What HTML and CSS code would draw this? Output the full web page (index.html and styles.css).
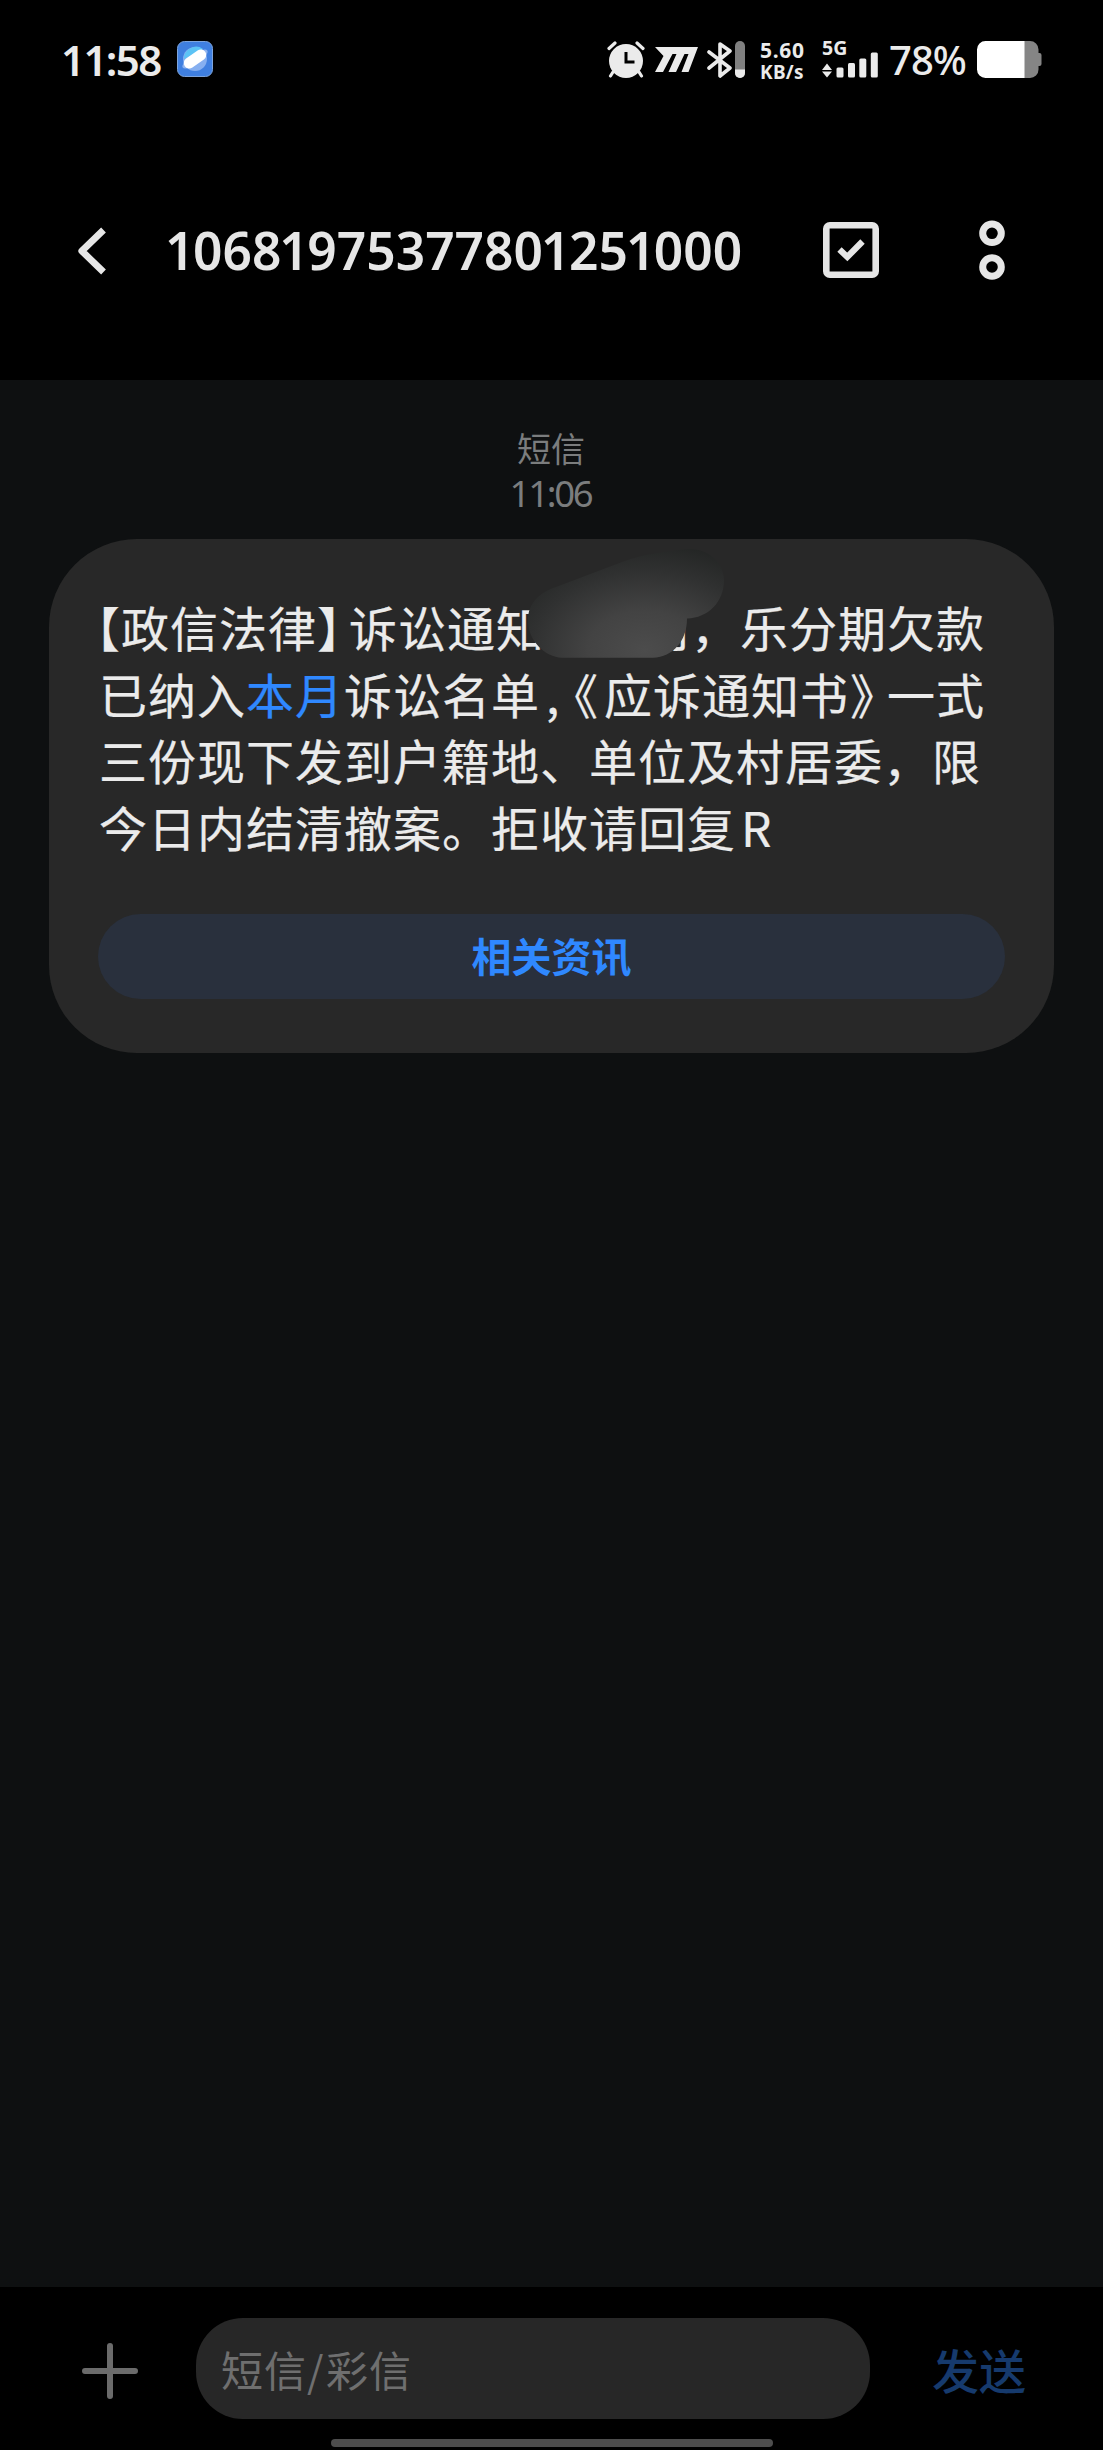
FILE: index.html
```html
<!DOCTYPE html>
<html lang="zh-CN">
<head>
<meta charset="utf-8">
<title>短信</title>
<link rel="stylesheet" href="styles.css">
</head>
<body>
<div class="phone">
  <header class="top">
    <div class="status">
      <div class="status-side">
        <span class="clock">11:58</span>
        <svg class="app-icon" width="36" height="36" viewBox="0 0 36 36">
          <rect x=".5" y=".5" width="35" height="35" rx="7" fill="#3f7fe0" stroke="#7da4dc"/>
          <circle cx="18" cy="18" r="12" fill="#86aff0"/>
          <path d="M7 18a12 12 0 0 1 19-10z" fill="#5cc3f5"/>
          <ellipse cx="18" cy="18" rx="15" ry="5" transform="rotate(-35 18 18)" fill="#8fb4ef"/>
          <rect x="5.500" y="12.500" width="25" height="11" rx="5.500" transform="rotate(-35 18 18)" fill="#fff"/>
        </svg>
      </div>
      <div class="status-side">
        <svg class="alarm" width="38" height="38" viewBox="0 0 38 38">
          <g stroke="#ebebeb" stroke-width="3.200" stroke-linecap="round"><path d="M2 7.500 8 2M36 7.500 30 2M6 31l-2.500 4M32 31l2.500 4"/></g>
          <circle cx="19" cy="20" r="17" fill="#ebebeb"/>
          <path d="M19 11v10h8.500" fill="none" stroke="#000" stroke-width="3"/>
        </svg>
        <svg class="m-icon" width="44" height="26" viewBox="0 0 44 26">
          <path d="M0 0H43L33.500 25H26.500L33.500 7H29.500L21 25H13.500L21.500 7H17.500L8 25H0L8.500 9z" fill="#ebebeb"/>
        </svg>
        <svg class="bt" width="38" height="38" viewBox="0 0 38 38">
          <path d="M2 11 23 27 13 35V3l10 7L2 27" fill="none" stroke="#ebebeb" stroke-width="3.600" stroke-linejoin="round" stroke-linecap="round"/>
          <rect x="28" y="0" width="10" height="37" rx="5" fill="#808080"/>
          <path d="M28 28.500h10V32a5 5 0 0 1-10 0z" fill="#ebebeb"/>
        </svg>
        <div class="speed"><span class="rate">5.60</span><span class="unit">KB/s</span></div>
        <div class="signal">
          <span class="net">5G</span>
          <svg width="56" height="26" viewBox="0 0 56 26">
            <path d="M5 11.500 10 18H0zM5 25.500 10 19.500H0z" fill="#ebebeb"/>
            <g fill="#ebebeb"><rect x="14.500" y="15.500" width="7" height="10" rx="1.500"/><rect x="26" y="11" width="7" height="14.500" rx="1.500"/><rect x="37.300" y="6.500" width="7" height="19" rx="1.500"/><rect x="48.800" y="0.500" width="7" height="25" rx="1.500"/></g>
          </svg>
        </div>
        <span class="percent">78%</span>
        <svg class="battery" width="65" height="37" viewBox="0 0 65 37">
          <path d="M47 0h6a8.500 8.500 0 0 1 8.500 8.500V12h1a2 2 0 0 1 2 2v9a2 2 0 0 1-2 2h-1v3.500A8.500 8.500 0 0 1 53 37h-6z" fill="#858585"/>
          <path d="M8.500 0H47.500V37H8.500A8.500 8.500 0 0 1 0 28.500V8.500A8.500 8.500 0 0 1 8.500 0z" fill="#fff"/>
        </svg>
      </div>
    </div>
    <div class="nav">
      <svg class="back" width="30" height="48" viewBox="0 0 30 48">
        <path d="M26.500 3 4.800 24 26.500 45" fill="none" stroke="#e6e6e6" stroke-width="6.800" stroke-linejoin="round"/>
      </svg>
      <h1 class="sender"><i>1</i>068<i>1</i>97537780<i>1</i>25<i>1</i>000</h1>
      <svg class="select" width="56" height="56" viewBox="0 0 56 56">
        <rect x="3.300" y="3.300" width="49.400" height="49.400" rx="3.500" fill="none" stroke="#e6e6e6" stroke-width="6.600"/>
        <path d="M16.500 27.500 24.300 35 39.500 19.500" fill="none" stroke="#e6e6e6" stroke-width="6.200"/>
      </svg>
      <svg class="more" width="26" height="60" viewBox="0 0 26 60">
        <g fill="none" stroke="#e6e6e6" stroke-width="7"><circle cx="13" cy="13.300" r="9.300"/><circle cx="13" cy="47" r="9.300"/></g>
      </svg>
    </div>
  </header>

  <main class="thread">
    <div class="stamp"><span class="kind">短信</span><span class="time">11:06</span></div>
    <article class="bubble">
      <div class="message">
        <p><span class="half open-lens">【</span>政信法律<span class="half close-lens">】</span>诉讼通知<span class="hidden-name"></span>司，乐分期欠款</p>
        <p>已纳入<a class="date">本月</a>诉讼名单<span class="comma">,</span><span class="half open-book">《</span>应诉通知书<span class="half close-book">》</span>一式</p>
        <p>三份现下发到户籍地、单位及村居委，限</p>
        <p>今日内结清撤案。拒收请回复<span class="latin">R</span></p>
        <svg class="smudge" width="200" height="112" viewBox="526 547 200 112">
          <defs>
            <radialGradient id="smear" gradientUnits="userSpaceOnUse" cx="645" cy="650" r="112" gradientTransform="translate(645 650) scale(1.450 1) translate(-645 -650)">
              <stop offset="0" stop-color="#4c4c4c"/><stop offset=".35" stop-color="#434343"/><stop offset=".7" stop-color="#303131"/><stop offset="1" stop-color="#222423"/>
            </radialGradient>
          </defs>
          <path d="M562 657.700H653C673 657 687 641 687 618.500 708 618 724 602 724 580 724 562 708 549 689 549 665 551 640 555 622 562L556 587C540 592 528 603 528 620 528 641 545 657 562 657.700z" fill="url(#smear)"/>
        </svg>
      </div>
      <button class="related" type="button">相关资讯</button>
    </article>
  </main>

  <footer class="composer">
    <div class="compose-row">
      <svg class="plus" width="56" height="56" viewBox="0 0 56 56">
        <path d="M3 28H53M28 3V53" stroke="#6b6b6b" stroke-width="6" stroke-linecap="round"/>
      </svg>
      <div class="field">短信<span class="slash">/</span>彩信</div>
      <span class="send">发送</span>
    </div>
    <div class="home-bar"></div>
  </footer>
</div>
</body>
</html>
```
FILE: styles.css
```css
* { box-sizing: border-box; }
html, body { margin: 0; background: #000; }
body {
  font-family: "Noto Sans", "Noto Sans CJK SC", sans-serif;
  color: #ebebeb;
  text-spacing-trim: space-all;
}
svg { display: block; flex: none; }

.phone { width: 1103px; height: 2450px; display: flex; flex-direction: column; overflow: hidden; }

.top { height: 380px; padding-top: 41px; background: #000; }
.status { display: flex; justify-content: space-between; height: 38px; padding: 0 61px 0 61px; }
.status-side { display: flex; align-items: flex-start; }
.clock { width: 116px; font-size: 42px; line-height: 37px; font-weight: 600; letter-spacing: -1.600px; white-space: nowrap; }
.alarm { margin-right: 10px; }
.m-icon { margin: 6px 8px 0 0; }
.bt { margin-right: 15px; }
.speed { width: 46px; margin-right: 16px; display: flex; flex-direction: column; font-weight: 700; white-space: nowrap; }
.rate { font-size: 21px; line-height: 18px; height: 20px; letter-spacing: 0.700px; }
.unit { font-size: 19px; line-height: 22px; height: 18px; letter-spacing: 0.300px; }
.signal { width: 56px; margin-right: 11px; display: flex; flex-direction: column; }
.net { font-size: 19.500px; line-height: 14px; height: 11px; font-weight: 700; }
.percent { width: 88px; font-size: 40px; line-height: 37px; font-weight: 500; letter-spacing: -1px; white-space: nowrap; }

.nav { display: flex; align-items: center; height: 60px; margin-top: 141px; padding-left: 77px; }
.back { margin-top: 1px; }
.sender { width: 656px; margin: 0; padding-left: 60px; font-size: 51.500px; line-height: 62px; font-weight: 600; letter-spacing: 0; color: #e6e6e6; white-space: nowrap; }
.sender i { font-style: normal; margin: 0 -1.500px 0 -2px; }
.select { margin-left: 60px; }
.more { margin-left: 100px; }

.thread { flex: 1; background: #0e1011; padding: 45px 49px 0; }
.stamp { display: flex; flex-direction: column; align-items: center; color: #7b7d7e; height: 114px; }
.kind { font-family: "Noto Sans CJK SC", sans-serif; font-size: 34px; line-height: 45px; margin-right: 1px; }
.time { font-size: 36.500px; line-height: 47px; letter-spacing: -2.300px; margin-right: 2px; }
.bubble { width: 1005px; height: 514px; border-radius: 88px; background: #282828; padding: 54px 48px 0 49px; }
.message { position: relative; height: 321px; padding-left: 1px; font-family: "Noto Sans CJK SC", sans-serif; font-size: 48px; letter-spacing: 1px; -webkit-text-stroke: 0.200px currentColor; }
.message p { margin: 0; height: 66.500px; line-height: 66.500px; white-space: nowrap; }
.half { font-feature-settings: "halt"; }
.open-lens { margin-left: -3px; }
.close-lens { margin-right: 7px; }
.hidden-name { display: inline-block; width: 97px; }
.date { color: #2f88ff; }
.comma { display: inline-block; width: 34px; padding-left: 6px; }
.open-book { margin-right: 5px; }
.close-book { margin: 0 12px 0 1px; }
.latin { margin-left: 5px; }
.smudge { position: absolute; left: 428px; top: -46px; }
.related { display: block; width: 907px; height: 85px; border: 0; border-radius: 43px; background: #29303d; color: #2f88ff; font: 700 40px/60px "Noto Sans CJK SC", sans-serif; padding: 0 0 3px; }

.composer { height: 163px; background: #000; padding-top: 31px; }
.compose-row { display: flex; align-items: center; height: 101px; padding-left: 82px; }
.plus { margin-top: 4px; }
.field { width: 674px; height: 101px; margin-left: 58px; padding-left: 25px; border-radius: 47px; background: #272727; color: #6f6f6f; font-family: "Noto Sans CJK SC", sans-serif; font-size: 42px; line-height: 101px; letter-spacing: 1px; }
.slash { display: inline-block; width: 19px; }
.send { margin-left: 62px; font: 500 47px/100px "Noto Sans CJK SC", sans-serif; color: #163a6d; }
.home-bar { width: 442px; height: 8px; margin: 20px auto 0; border-radius: 4px; background: #4d4d4d; }
```
